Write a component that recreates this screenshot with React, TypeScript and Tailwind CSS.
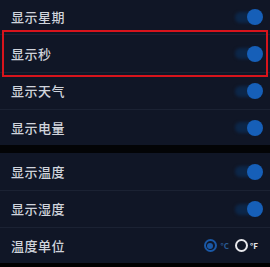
import React from "react";

const font = { fontFamily: '"Noto Sans CJK SC", "Noto Sans", sans-serif' };

function Toggle() {
  return (
    <div className="relative w-[30px] h-[17px] flex items-center">
      <div className="absolute left-[2px] right-[4px] h-[11px] rounded-full bg-[#0c2648] blur-[1.5px]" />
      <div className="absolute right-0 w-[16px] h-[16px] rounded-full bg-[#165fb8] blur-[0.6px]" />
    </div>
  );
}

function Row({ label, h, border = true }: { label: string; h: string; border?: boolean }) {
  return (
    <div className={`flex items-center justify-between pl-[11px] pr-[7px] ${h} ${border ? "border-b border-[#1b2233]" : ""}`}>
      <span className="text-[13px] font-medium text-[#d0d4dc] tracking-[0.5px]">{label}</span>
      <Toggle />
    </div>
  );
}

export default function App() {
  return (
    <div className="relative w-[270px] h-[267px] bg-[#000] overflow-hidden" style={font}>
      <div className="bg-[#101626]">
        <Row label="显示星期" h="h-[35px]" />
        <Row label="显示秒" h="h-[38px]" />
        <Row label="显示天气" h="h-[37px]" />
        <Row label="显示电量" h="h-[35px]" border={false} />
      </div>
      <div className="h-[8px] bg-[#030406]" />
      <div className="bg-[#101626]">
        <Row label="显示温度" h="h-[38px]" />
        <Row label="显示湿度" h="h-[37px]" />
        <div className="flex items-center justify-between pl-[11px] pr-[12px] h-[35px]">
          <span className="text-[13px] font-medium text-[#d0d4dc] tracking-[0.5px]">温度单位</span>
          <div className="flex items-center">
            <div className="w-[13px] h-[13px] rounded-full border-2 border-[#1a58a6] flex items-center justify-center">
              <div className="w-[6px] h-[6px] rounded-full bg-[#1a58a6]" />
            </div>
            <span className="ml-[4px] text-[8px] font-bold text-[#2a5a94]">°C</span>
            <div className="ml-[6px] w-[13px] h-[13px] rounded-full border-2 border-[#e8e8ec]" />
            <span className="ml-[2px] text-[8px] text-[#e8e8ec] font-bold">°F</span>
          </div>
        </div>
      </div>
      <div className="absolute left-[2px] top-[30px] w-[266px] h-[47px] border-2 border-[#d8141c]" />
    </div>
  );
}
